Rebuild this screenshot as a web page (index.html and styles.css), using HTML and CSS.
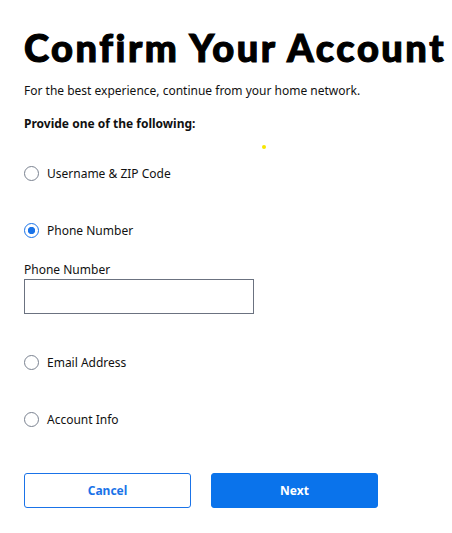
FILE: index.html
```html
<!DOCTYPE html>
<html>
<head>
<meta charset="utf-8">
<link rel="stylesheet" href="styles.css">
</head>
<body>
<main class="page">
  <h1 class="title">Confirm Your Account</h1>
  <p class="intro">For the best experience, continue from your home network.</p>
  <p class="prompt">Provide one of the following:</p>
  <span class="dot"></span>
  <div class="options">
    <label class="option"><span class="radio"></span><span class="label">Username &amp; ZIP Code</span></label>
    <label class="option"><span class="radio checked"></span><span class="label">Phone Number</span></label>
    <div class="field">
      <span class="field-label">Phone Number</span>
      <span class="input"></span>
    </div>
    <label class="option"><span class="radio"></span><span class="label">Email Address</span></label>
    <label class="option"><span class="radio"></span><span class="label">Account Info</span></label>
  </div>
  <div class="actions">
    <button class="btn btn-outline">Cancel</button>
    <button class="btn btn-primary">Next</button>
  </div>
</main>
</body>
</html>
```
FILE: styles.css
```css
* { box-sizing: border-box; }
html, body { margin: 0; background: #fff; }
body { font-family: "Noto Sans", "Open Sans", sans-serif; color: #111; }
.page { position: relative; padding: 27px 0 0 24px; }
.title {
  font-family: "Lato", "Noto Sans", sans-serif;
  font-weight: 900;
  font-size: 38px;
  line-height: 40px;
  margin: 0;
  color: #000;
  letter-spacing: 2.5px;
  -webkit-text-stroke: 1.1px #000;
  white-space: nowrap;
}
.intro { font-size: 12px; margin: 16px 0 0; line-height: 16px; }
.prompt { font-size: 12px; font-weight: 700; margin: 17px 0 0; line-height: 16px; }
.dot { position: absolute; left: 262px; top: 145px; width: 4px; height: 4px; border-radius: 50%; background: #f7e600; }
.options { display: flex; flex-direction: column; margin-top: 33px; }
.option { display: flex; align-items: center; gap: 8px; height: 16px; font-size: 12px; }
.option + .option { margin-top: 41px; }
.field + .option { margin-top: 40px; }
.radio { width: 15px; height: 15px; border-radius: 50%; border: 1.5px solid #7a8290; flex: none; }
.radio.checked { border-color: #1a73e8; background: radial-gradient(circle, #1a73e8 0 3.4px, #fff 3.9px); }
.field { display: flex; flex-direction: column; margin-top: 24px; }
.field-label { font-size: 12px; line-height: 16px; }
.input { display: block; width: 230px; height: 35px; border: 1px solid #6b7280; margin-top: 1px; }
.actions { display: flex; gap: 20px; margin-top: 46px; }
.btn { width: 167px; height: 35px; border-radius: 3px; font-family: "Noto Sans", sans-serif; font-size: 12px; font-weight: 700; cursor: pointer; }
.btn-outline { background: #fff; color: #1a73e8; border: 1px solid #1a73e8; }
.btn-primary { background: #0a73eb; color: #fff; border: 1px solid #0a73eb; }
```
